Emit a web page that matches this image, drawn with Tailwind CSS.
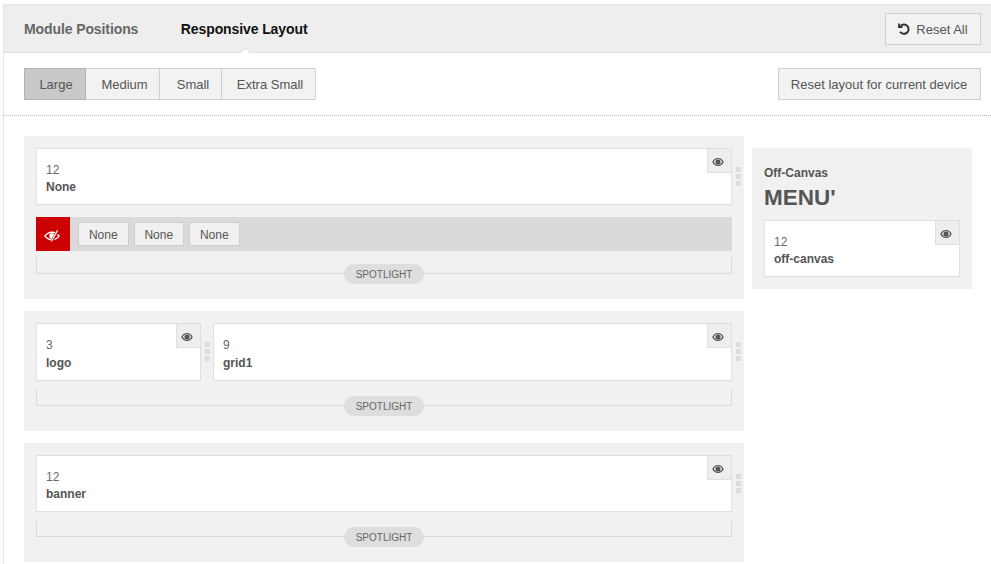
<!DOCTYPE html>
<html>
<head>
<meta charset="utf-8">
<script src="https://cdn.jsdelivr.net/npm/@tailwindcss/browser@4"></script>
</head>
<body class="bg-white">
<div class="h-[564px] w-[991px] overflow-hidden pt-1 pl-[3px] font-['Liberation_Sans',Arial,sans-serif] text-[13px] text-[#555]">
  <div class="h-full border-l border-[#e4e4e4]">
    <!-- tabs -->
    <div class="relative flex h-[49px] items-center justify-between border-y border-t-[#e4e4e4] border-b-[#dedede] bg-[#eeeeee] pr-[10px] pl-5">
      <div class="flex items-center gap-[42.500px] text-sm font-bold tracking-[-0.1px]">
        <span class="text-[#666]">Module Positions</span>
        <span class="text-[#111]">Responsive Layout</span>
      </div>
      <button class="flex h-8 w-24 items-center justify-center gap-[6px] border border-[#cfcfcf] bg-[#f2f2f2] text-[13px] text-[#555]">
        <svg width="12" height="12" viewBox="0 0 12 12" fill="none" stroke="#333" stroke-width="2"><path d="M2.600 2.800 A4.700 4.700 0 1 1 2 8.800"/><path d="M1 .5 V4 H4.500" stroke-width="1.800"/></svg>
        <span class="pt-[2px]">Reset All</span>
      </button>
      <div class="absolute -bottom-px left-[235px] h-[6px] w-[12px] overflow-hidden">
        <div class="mx-auto mt-[2px] size-[9px] rotate-45 border border-[#dedede] bg-white"></div>
      </div>
    </div>
    <!-- toolbar -->
    <div class="flex h-[63px] items-center justify-between border-b border-dotted border-[#bbb] pr-[10px] pl-5">
      <div class="flex h-8 text-[13px]">
        <button class="w-[62px] border border-[#b4b4b4] bg-[#c9c9c9] pt-px pl-[2px]">Large</button>
        <button class="w-[74px] border-y border-r border-[#cfcfcf] bg-[#f2f2f2] pt-px pl-[4px]">Medium</button>
        <button class="w-[62px] border-y border-r border-[#cfcfcf] bg-[#f2f2f2] pt-px pl-[5px]">Small</button>
        <button class="w-[94px] border-y border-r border-[#cfcfcf] bg-[#f2f2f2] pt-px pl-[3px]">Extra Small</button>
      </div>
      <button class="h-8 w-[203px] border border-[#cfcfcf] bg-[#f2f2f2] pt-px pr-px text-[13px]">Reset layout for current device</button>
    </div>
    <!-- body -->
    <div class="flex items-start gap-2 pt-5 pl-5">
      <div class="flex w-[720px] flex-col gap-3">
        <!-- section 1 -->
        <section class="h-[163px] bg-[#f1f1f1] p-3">
          <div class="relative h-[57px] border border-[#dfdfdf] bg-white pt-[13px] pr-3 pl-[9px]">
            <div class="text-xs leading-[16px] text-[#666]">12</div>
            <div class="text-xs leading-[18px] font-bold">None</div>
            <span class="absolute top-[-1px] right-[-1px] flex h-[25px] w-[25px] items-center justify-center border border-[#dfdfdf] bg-[#eeeeee] pt-[3px] pr-[3px]">
              <svg width="12" height="8" viewBox="0 0 13 9"><path fill-rule="evenodd" fill="#555" d="M6.500 0C3.700 0 1.400 1.800 0 4.500 1.400 7.200 3.700 9 6.500 9S11.600 7.200 13 4.500C11.600 1.800 9.300 0 6.500 0ZM6.500 1.200C8.300 1.200 10 2.200 11.300 4.500 10 6.800 8.300 7.800 6.500 7.800S3 6.800 1.700 4.500C3 2.200 4.700 1.200 6.500 1.200ZM6.500 1.600A2.900 2.900 0 1 0 6.500 7.400 2.900 2.900 0 1 0 6.500 1.600Z"/></svg>
            </span>
            <span class="absolute top-[18px] right-[-10px] flex flex-col gap-[2px]">
              <i class="block size-[5px] bg-[#ddd]"></i><i class="block size-[5px] bg-[#ddd]"></i><i class="block size-[5px] bg-[#ddd]"></i>
            </span>
          </div>
          <div class="mt-3 flex h-[34px] items-center bg-[#dadada]">
            <span class="flex h-[34px] w-[34px] items-center justify-center bg-[#cc0000] pt-[3px] pr-[2px]">
              <svg width="16" height="12" viewBox="0 0 16 12"><path fill-rule="evenodd" fill="#fff" d="M8 1.500C4.800 1.500 2 3.300 0 6 2 8.700 4.800 10.500 8 10.500S14 8.700 16 6C14 3.300 11.200 1.500 8 1.500ZM8 3C10.500 3 12.700 4.100 14.200 6 12.700 7.900 10.500 9 8 9S3.300 7.900 1.800 6C3.300 4.100 5.500 3 8 3ZM8 3.300A2.700 2.700 0 1 0 8 8.700 2.700 2.700 0 1 0 8 3.300Z"/><path d="M14 .5 7.500 12" stroke="#cc0000" stroke-width="2.800"/><path d="M13.600 .3 7.400 11.500" stroke="#fff" stroke-width="1.200"/></svg>
            </span>
            <div class="ml-2 flex gap-[5px] text-xs">
              <span class="flex h-6 w-[50.500px] items-center justify-center border border-[#cfcfcf] bg-[#f0f0f0] pt-px">None</span>
              <span class="flex h-6 w-[50.500px] items-center justify-center border border-[#cfcfcf] bg-[#f0f0f0] pt-px">None</span>
              <span class="flex h-6 w-[50.500px] items-center justify-center border border-[#cfcfcf] bg-[#f0f0f0] pt-px">None</span>
            </div>
          </div>
          <div class="relative mt-[6px] h-[17px] border-x border-b border-[#d9d9d9]">
            <span class="absolute top-[7px] left-1/2 flex h-5 w-20 -translate-x-1/2 items-center justify-center rounded-full bg-[#dedede] text-[10px] text-[#666]">SPOTLIGHT</span>
          </div>
        </section>
        <!-- section 2 -->
        <section class="h-[120px] bg-[#f1f1f1] p-3">
          <div class="flex gap-3">
            <div class="relative h-[58px] w-[165px] border border-[#dfdfdf] bg-white pt-[13px] pl-[9px]">
              <div class="text-xs leading-[16px] text-[#666]">3</div>
              <div class="text-xs leading-[20px] font-bold">logo</div>
              <span class="absolute top-[-1px] right-[-1px] flex h-[25px] w-[25px] items-center justify-center border border-[#dfdfdf] bg-[#eeeeee] pt-[3px] pr-[3px]">
                <svg width="12" height="8" viewBox="0 0 13 9"><path fill-rule="evenodd" fill="#555" d="M6.500 0C3.700 0 1.400 1.800 0 4.500 1.400 7.200 3.700 9 6.500 9S11.600 7.200 13 4.500C11.600 1.800 9.300 0 6.500 0ZM6.500 1.200C8.300 1.200 10 2.200 11.300 4.500 10 6.800 8.300 7.800 6.500 7.800S3 6.800 1.700 4.500C3 2.200 4.700 1.200 6.500 1.200ZM6.500 1.600A2.900 2.900 0 1 0 6.500 7.400 2.900 2.900 0 1 0 6.500 1.600Z"/></svg>
              </span>
              <span class="absolute top-[18px] right-[-10px] flex flex-col gap-[2px]">
                <i class="block size-[5px] bg-[#ddd]"></i><i class="block size-[5px] bg-[#ddd]"></i><i class="block size-[5px] bg-[#ddd]"></i>
              </span>
            </div>
            <div class="relative h-[58px] w-[519px] border border-[#dfdfdf] bg-white pt-[13px] pl-[9px]">
              <div class="text-xs leading-[16px] text-[#666]">9</div>
              <div class="text-xs leading-[20px] font-bold">grid1</div>
              <span class="absolute top-[-1px] right-[-1px] flex h-[25px] w-[25px] items-center justify-center border border-[#dfdfdf] bg-[#eeeeee] pt-[3px] pr-[3px]">
                <svg width="12" height="8" viewBox="0 0 13 9"><path fill-rule="evenodd" fill="#555" d="M6.500 0C3.700 0 1.400 1.800 0 4.500 1.400 7.200 3.700 9 6.500 9S11.600 7.200 13 4.500C11.600 1.800 9.300 0 6.500 0ZM6.500 1.200C8.300 1.200 10 2.200 11.300 4.500 10 6.800 8.300 7.800 6.500 7.800S3 6.800 1.700 4.500C3 2.200 4.700 1.200 6.500 1.200ZM6.500 1.600A2.900 2.900 0 1 0 6.500 7.400 2.900 2.900 0 1 0 6.500 1.600Z"/></svg>
              </span>
              <span class="absolute top-[18px] right-[-10px] flex flex-col gap-[2px]">
                <i class="block size-[5px] bg-[#ddd]"></i><i class="block size-[5px] bg-[#ddd]"></i><i class="block size-[5px] bg-[#ddd]"></i>
              </span>
            </div>
          </div>
          <div class="relative mt-[9px] h-[16px] border-x border-b border-[#d9d9d9]">
            <span class="absolute top-[6px] left-1/2 flex h-5 w-20 -translate-x-1/2 items-center justify-center rounded-full bg-[#dedede] text-[10px] text-[#666]">SPOTLIGHT</span>
          </div>
        </section>
        <!-- section 3 -->
        <section class="h-[119px] bg-[#f1f1f1] p-3">
          <div class="relative h-[57px] border border-[#dfdfdf] bg-white pt-[13px] pr-3 pl-[9px]">
            <div class="text-xs leading-[16px] text-[#666]">12</div>
            <div class="text-xs leading-[18px] font-bold">banner</div>
            <span class="absolute top-[-1px] right-[-1px] flex h-[25px] w-[25px] items-center justify-center border border-[#dfdfdf] bg-[#eeeeee] pt-[3px] pr-[3px]">
              <svg width="12" height="8" viewBox="0 0 13 9"><path fill-rule="evenodd" fill="#555" d="M6.500 0C3.700 0 1.400 1.800 0 4.500 1.400 7.200 3.700 9 6.500 9S11.600 7.200 13 4.500C11.600 1.800 9.300 0 6.500 0ZM6.500 1.200C8.300 1.200 10 2.200 11.300 4.500 10 6.800 8.300 7.800 6.500 7.800S3 6.800 1.700 4.500C3 2.200 4.700 1.200 6.500 1.200ZM6.500 1.600A2.900 2.900 0 1 0 6.500 7.400 2.900 2.900 0 1 0 6.500 1.600Z"/></svg>
            </span>
            <span class="absolute top-[18px] right-[-10px] flex flex-col gap-[2px]">
              <i class="block size-[5px] bg-[#ddd]"></i><i class="block size-[5px] bg-[#ddd]"></i><i class="block size-[5px] bg-[#ddd]"></i>
            </span>
          </div>
          <div class="relative mt-[9px] h-[16px] border-x border-b border-[#d9d9d9]">
            <span class="absolute top-[6px] left-1/2 flex h-5 w-20 -translate-x-1/2 items-center justify-center rounded-full bg-[#dedede] text-[10px] text-[#666]">SPOTLIGHT</span>
          </div>
        </section>
      </div>
      <!-- off-canvas -->
      <aside class="mt-3 h-[141px] w-[220px] bg-[#f1f1f1] px-3 pt-[18px]">
        <div class="text-xs leading-[14px] font-bold">Off-Canvas</div>
        <div class="mt-[4px] text-[22.500px] leading-[28px] font-bold">MENU'</div>
        <div class="relative mt-[8px] h-[57px] w-[196px] border border-[#dfdfdf] bg-white pt-[13px] pl-[9px]">
          <div class="text-xs leading-[16px] text-[#666]">12</div>
          <div class="text-xs leading-[18px] font-bold">off-canvas</div>
          <span class="absolute top-[-1px] right-[-1px] flex h-[25px] w-[25px] items-center justify-center border border-[#dfdfdf] bg-[#eeeeee] pt-[3px] pr-[3px]">
            <svg width="12" height="8" viewBox="0 0 13 9"><path fill-rule="evenodd" fill="#555" d="M6.500 0C3.700 0 1.400 1.800 0 4.500 1.400 7.200 3.700 9 6.500 9S11.600 7.200 13 4.500C11.600 1.800 9.300 0 6.500 0ZM6.500 1.200C8.300 1.200 10 2.200 11.300 4.500 10 6.800 8.300 7.800 6.500 7.800S3 6.800 1.700 4.500C3 2.200 4.700 1.200 6.500 1.200ZM6.500 1.600A2.900 2.900 0 1 0 6.500 7.400 2.900 2.900 0 1 0 6.500 1.600Z"/></svg>
          </span>
        </div>
      </aside>
    </div>
  </div>
</div>
</body>
</html>
